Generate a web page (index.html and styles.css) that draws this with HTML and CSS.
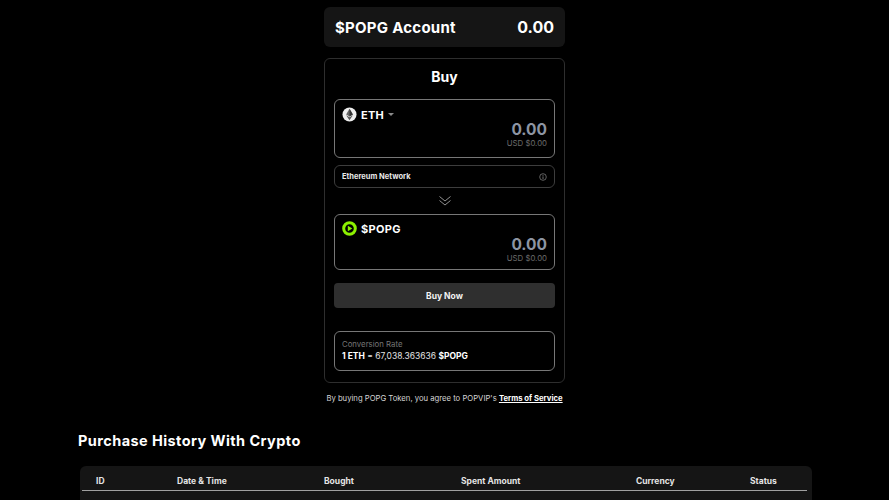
FILE: index.html
```html
<!DOCTYPE html>
<html lang="en">
  <head>
    <meta charset="UTF-8" />
    <title>Buy $POPG</title>
    <link rel="stylesheet" href="styles.css">
  </head>
  <body>
    <div class="page">
      <div class="column">
        <div class="account">
          <span>$POPG Account</span>
          <span class="account-value">0.00</span>
        </div>

        <div class="buy">
          <h2>Buy</h2>

          <div class="swap swap-eth">
            <div class="coin">
              <svg class="coin-icon" viewBox="0 0 16 16">
                <circle cx="8" cy="8" r="7.5" fill="#eeeeee"/>
                <path d="M8 1.800 4.400 8 8 10.100 11.600 8z" fill="#666666"/>
                <path d="M8 1.800V10.100L11.600 8z" fill="#333333"/>
                <path d="M4.400 8.800 8 14.200 11.600 8.800 8 10.900z" fill="#555555"/>
              </svg>
              <span>ETH</span>
              <span class="caret"></span>
            </div>
            <div class="amount">0.00</div>
            <div class="usd">USD $0.00</div>
          </div>

          <div class="network">
            <span>Ethereum Network</span>
            <svg class="info" viewBox="0 0 8 8">
              <circle cx="4" cy="4" r="3.300" fill="none" stroke="#8a8a8a" stroke-width="0.7"/>
              <path d="M4 3.400V6M4 2v.8" stroke="#8a8a8a" stroke-width="0.8"/>
            </svg>
          </div>

          <div class="arrow">
            <svg viewBox="0 0 12 10" width="12" height="10">
              <path d="M.5.5 6 5 11.500.5M.5 4.500 6 9 11.500 4.500" fill="none" stroke="#b5b5b5" stroke-width="0.8"/>
            </svg>
          </div>

          <div class="swap swap-popg">
            <div class="coin">
              <svg class="coin-icon" viewBox="0 0 16 16">
                <circle cx="8" cy="8" r="6.200" fill="none" stroke="#8cf000" stroke-width="3.200"/>
                <path d="M6.200 5 11 8 6.200 11z" fill="#8cf000"/>
              </svg>
              <span>$POPG</span>
            </div>
            <div class="amount">0.00</div>
            <div class="usd">USD $0.00</div>
          </div>

          <button class="buy-btn">Buy Now</button>

          <div class="rate">
            <div class="rate-label">Conversion Rate</div>
            <div class="rate-value"><b>1 ETH</b> = 67,038.363636 <b>$POPG</b></div>
          </div>
        </div>

        <p class="terms">By buying POPG Token, you agree to POPVIP's <a href="#">Terms of Service</a></p>
      </div>

      <h1 class="history-title">Purchase History With Crypto</h1>

      <div class="history">
        <div class="history-head">
          <span>ID</span>
          <span>Date &amp; Time</span>
          <span>Bought</span>
          <span>Spent Amount</span>
          <span>Currency</span>
          <span>Status</span>
        </div>
      </div>
    </div>
  </body>
</html>
```

FILE: styles.css
```css
html,
body {
  margin: 0;
  padding: 0;
  background-color: #000;
  color: #fff;
  font-family: "Inter", "Liberation Sans", sans-serif;
}

.page {
  height: 500px;
  overflow: hidden;
  padding-top: 7px;
  box-sizing: border-box;
}

.column {
  width: 241px;
  margin: 0 auto;
}

.account {
  display: flex;
  justify-content: space-between;
  align-items: center;
  height: 40px;
  padding: 0 11px;
  box-sizing: border-box;
  background-color: #151515;
  border-radius: 6px;
  font-size: 15px;
  font-weight: 700;
  letter-spacing: 0.25px;
}

.account-value {
  font-size: 16px;
  letter-spacing: 0;
}

.buy {
  height: 325px;
  margin-top: 11px;
  padding: 0 9px;
  box-sizing: border-box;
  border: 1px solid #2e2e2e;
  border-radius: 6px;
}

.buy h2 {
  margin: 0;
  padding-top: 10px;
  height: 40px;
  box-sizing: border-box;
  text-align: center;
  font-size: 14px;
  line-height: 16px;
  font-weight: 700;
}

.swap {
  padding: 7px 7px 0;
  box-sizing: border-box;
  border: 1px solid #777;
  border-radius: 6px;
}

.swap-eth {
  height: 59px;
}

.swap-popg {
  height: 56px;
  padding-top: 6px;
}

.swap-popg .amount {
  margin-top: 0;
}

.coin {
  display: flex;
  align-items: center;
  gap: 4px;
  font-size: 11px;
  font-weight: 700;
  letter-spacing: 0.3px;
}

.coin-icon {
  width: 15px;
  height: 15px;
}

.caret {
  width: 0;
  height: 0;
  border-left: 3px solid transparent;
  border-right: 3px solid transparent;
  border-top: 3px solid #8a8a8a;
}

.amount {
  margin-top: -1px;
  text-align: right;
  color: #8d95a3;
  font-size: 15.500px;
  line-height: 17px;
  font-weight: 700;
}

.usd {
  text-align: right;
  color: #6b6b6b;
  font-size: 7.800px;
  line-height: 10px;
}

.network {
  display: flex;
  justify-content: space-between;
  align-items: center;
  height: 23px;
  margin-top: 7px;
  padding: 0 7px;
  box-sizing: border-box;
  border: 1px solid #3d3d3d;
  border-radius: 6px;
  font-size: 7.500px;
  font-weight: 700;
  color: #e8e8e8;
}

.info {
  width: 8px;
  height: 8px;
}

.arrow {
  display: flex;
  justify-content: center;
  align-items: center;
  height: 26px;
}

.buy-btn {
  display: block;
  width: 100%;
  height: 25px;
  margin-top: 13px;
  border: none;
  border-radius: 4px;
  background-color: #2f2f2f;
  color: #f2f2f2;
  font-family: inherit;
  font-size: 8.500px;
  font-weight: 700;
}

.rate {
  height: 40px;
  margin-top: 23px;
  padding: 6px 7px;
  box-sizing: border-box;
  border: 1px solid #777;
  border-radius: 6px;
}

.rate-label {
  color: #757575;
  font-size: 7.800px;
  line-height: 12px;
}

.rate-value {
  color: #e0e0e0;
  font-size: 8.500px;
  line-height: 13px;
}

.rate-value b {
  color: #fff;
}

.terms {
  margin: 10px 0 0;
  text-align: center;
  white-space: nowrap;
  color: #d5d5d5;
  font-size: 7.700px;
  line-height: 12px;
}

.terms a {
  color: #fff;
  font-weight: 700;
}

.history-title {
  margin: 27px 0 0 78px;
  font-size: 14.500px;
  line-height: 18px;
  font-weight: 700;
  letter-spacing: 0.42px;
}

.history {
  width: 732px;
  height: 60px;
  margin: 16px 0 0 80px;
  padding: 0 5px 0 2px;
  box-sizing: border-box;
  background-color: #151515;
  border-radius: 6px;
}

.history-head {
  display: grid;
  grid-template-columns: 81px 147px 137px 175px 114px 1fr;
  align-items: end;
  height: 25px;
  padding: 0 0 3px 14px;
  box-sizing: border-box;
  border-bottom: 1px solid #a0a0a0;
  font-size: 8.500px;
  line-height: 12px;
  font-weight: 700;
  color: #e4e4e4;
}
```
